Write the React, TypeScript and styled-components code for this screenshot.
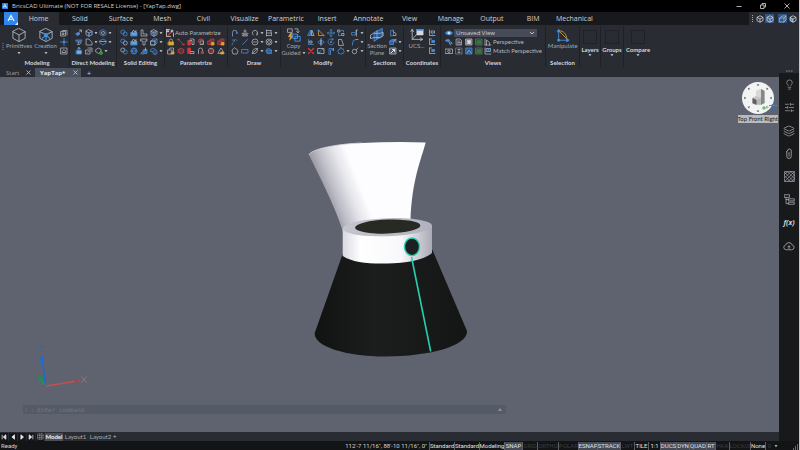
import React from "react";
import styled, { createGlobalStyle } from "styled-components";
import { Layers, Lightbulb, SlidersHorizontal } from "lucide-react";

const G = "#b4b8c0";
const B = "#4790de";
const R = "#cc3a40";
const Y = "#dba63c";
const PANEL = "#2a2c34";
const NARROW = `Lato, "Open Sans", sans-serif`;

const Global = createGlobalStyle`
  * { box-sizing: border-box; }
  html, body, #root { height: 100%; }
  body {
    margin: 0;
    background: #000;
    color: #c3c5cb;
    font: 6px/8px "Open Sans", "Noto Sans", sans-serif;
    overflow: hidden;
  }
  button, input, select {
    font: inherit;
    color: inherit;
    background: none;
    border: 0;
    padding: 0;
    margin: 0;
  }
  svg { display: block; flex: none; }
`;

/* ---------- drawing helpers ---------- */

type StrokeProps = { d: string; c?: string; f?: string; w?: number };
const P = ({ d, c = G, f = "none", w = 1.5 }: StrokeProps) => (
  <path d={d} stroke={c} fill={f} strokeWidth={w} strokeLinejoin="round" strokeLinecap="round" />
);
const O = ({ x, y, r, c = G, f = "none" }: { x: number; y: number; r: number; c?: string; f?: string }) => (
  <circle cx={x} cy={y} r={r} stroke={c} fill={f} strokeWidth={1.5} />
);

const CUBE = "M8 1.5 14 4.7V11.3L8 14.5 2 11.3V4.7ZM2 4.7 8 8 14 4.7M8 8V14.5";
const BOX = "M2 6H10V14H2ZM2 6 6 2H14L10 6M14 2V10L10 14";

const glyphs: Record<string, React.ReactNode> = {
  cube: <P d="M8 0.5 15 4.2V11.8L8 15.5 1 11.8V4.2ZM1 4.2 8 8 15 4.2M8 8V15.5" w={1} />,
  creation: (
    <>
      <P d="M8 0.5 15 4.2V11.8L8 15.5 1 11.8V4.2ZM1 4.2 8 8 15 4.2" w={1} />
      <P d="M4 5.5 12 11.5M12 5.5 4 11.5M8 8V14" c={B} w={1.3} />
      <O x={8} y={8} r={1.4} c={B} f={B} />
    </>
  ),
  solidBox: <P d={BOX} />,
  mirrorPart: (<><P d="M5 3H14V12" /><P d="M2 5H11V14H2Z" /><P d="M5 8H8V11H5Z" /></>),
  spin: (<><P d="M1 8H6M10 8H15M8 1V5M8 11V15" c={B} /><O x={8} y={8} r={2} c={B} f={B} /></>),
  frame: (<><P d="M2 2H14V14H2Z" /><P d="M5 8 8 5 11 8V11H5Z" /></>),
  pull: (<><P d="M2 9 7 7 10 10 5 13Z" c={B} f={B} /><P d="M8 7 13 2M9 2H13V6" /></>),
  cubeBlue: (<><P d={CUBE} /><P d="M8 8 14 4.7V11.3L8 14.5Z" c={B} /></>),
  ring: (<><P d="M8 1.5 14 5V11L8 14.5 2 11V5Z" c={B} /><O x={8} y={8} r={3} /></>),
  cup: (<><P d="M2 4H14L12 8H4Z" c={B} f="#2e5f96" /><P d="M8 8 5 13H9L12 9" /></>),
  chamfer: <P d="M3 2H8L14 9V14H3Z" />,
  poly: (<><P d="M2 5 8 2 14 5V10L8 14 2 10Z" c={B} /><P d="M2 7H14" /></>),
  extrude: (<><P d="M8 1V6M5 4 8 1 11 4" /><P d="M3 7H13V14H3Z" c={B} f={B} /><P d="M6 9V12M10 9V12" c="#dfe3ea" /></>),
  sheets: (<><P d="M2 6H10V14H2ZM6 2H14V10" /><P d="M5 11 12 4" c={B} w={2} /></>),
  paint: (<><P d="M2 5 7 2 12 5V10L7 13 2 10Z" /><O x={12} y={12} r={3} c="#49a548" f="#2f8d35" /></>),
  union: (<><O x={5.5} y={6} r={4} c={B} /><O x={10.5} y={10} r={4} c={B} /></>),
  subtract: (<><O x={10.5} y={10} r={4} /><O x={5.5} y={6} r={4} c={B} /></>),
  intersect: (<><O x={5.5} y={6} r={4} /><O x={10.5} y={10} r={4} c={B} /></>),
  slab: (<><P d="M2 7H14V14H2Z" c={B} f={B} /><P d="M4 7 7 2 10 6 12 3V7" /><P d="M4 10H12" /></>),
  ell: <P d="M3 2H6V10H14V14H3Z" />,
  tee: <P d="M2 2H14V6H10V14H6V6H2Z" />,
  cubeSphere: (<><P d={CUBE} /><O x={8} y={8} r={3.5} c={B} /></>),
  boxBlue: (<><P d={BOX} c={B} /><P d="M2 6H10V14H2Z" /></>),
  globe: (<><O x={8} y={8} r={6} c={B} /><P d="M2 8H14M8 2C4 6 4 10 8 14C12 10 12 6 8 2" c={B} /></>),
  stairs: (<><P d="M2 5 6 2 10 5 14 8V13L10 15 6 13V9L2 9Z" c={B} /><P d="M6 9 10 5M10 15V10" c={B} /></>),
  wedge: (<><P d="M2 13 8 5V13ZM8 5H14V13H8" c={B} f="#2e5f96" /><P d="M11 2V8" /></>),
  wand: (<><P d="M1 1H7M1 1V15H9M15 8V15" c="#e8e8e8" w={1.4} /><P d="M4 13 11 6" c={R} w={2.4} /><P d="M4 3V6M2.5 4.5H5.5M12 2V6M10 4H14" c="#e8e8e8" w={1.8} /></>),
  lock: (<><P d="M5 8V5A3 3 0 0 1 11 5V8" c={Y} /><P d="M3 8H13V14H3Z" c={Y} f={Y} /></>),
  redLine: (<><P d="M3 3 13 13" c={R} w={1.6} /><P d="M2 3H4M12 13H14" c={R} w={3} /></>),
  redBars: (<><P d="M2 5H7V14H2Z" c={R} f={R} /><P d="M6 2H14V13H10V5H6" /></>),
  redHook: (<><P d="M3 8A5 5 0 1 1 9 12" c={R} w={2.2} /><P d="M7 6H13V13H7Z" /></>),
  redLock: (<><P d="M2 6H10V13H2ZM4 6 7 2H14V8" c={R} f="#742a30" /><P d="M9 9H14V14H9Z" c={Y} f={Y} /></>),
  greyLock: (<><P d="M2 6H10V14H2ZM4 5 6 2H13V9" /><P d="M9 10H14V14H9Z" c={Y} f={Y} /></>),
  redRing: (<><O x={8} y={8} r={5.5} c={R} /><P d="M2 6H14M2 10H14" c={R} /></>),
  redStep: (<><P d="M2 2H7V13H2Z" c={R} f={R} /><P d="M7 9H14V13H7" /></>),
  arch: (<><P d="M3 13V6A4 4 0 0 1 11 6V8" /><P d="M9 9H13V13H9Z" c={R} f={R} /></>),
  bulb: (<><O x={8} y={8} r={5.5} /><P d="M4 6H12M4 10H12" c={R} w={2} /></>),
  prism: (<><P d="M2 12 8 2 14 12Z" /><P d="M8 10H13V14H8Z" c={Y} f={Y} /></>),
  arcLine: (<><P d="M3 14V7A4 4 0 0 1 12 7" c="#7fa9da" /><O x={12} y={8} r={1.2} c={B} f={B} /></>),
  person: (<><O x={8} y={4} r={2} /><P d="M3 13C3 8 13 8 13 13ZM2 9 6 8M14 9 10 8" f="#6b7077" /></>),
  loop: <P d="M4 12A5.5 5.5 0 1 1 12 12M12 12V8" />,
  hatch: <P d="M3 2V14M3 3H12M3 8H13M3 13H12M12 3V6M13 8V13" />,
  curve: (<><P d="M2 14C2 9 5 10 6 7S9 1 12 5" c={B} /><P d="M3 4H7" c={B} /></>),
  line: <P d="M3 13 13 3" c={B} />,
  circle: (<><O x={8} y={8} r={6} /><P d="M5 8H11" /></>),
  target: (<><O x={8} y={8} r={6} /><O x={8} y={8} r={3} /></>),
  pent: <P d="M8 2 14 7 12 14H4L2 7Z" />,
  rect: <P d="M2 5H14V12H2Z" c={B} />,
  leaf: <P d="M3 13C2 5 6 3 13 3C13 10 11 14 3 13ZM3 13 13 3" />,
  gearBlue: (<><O x={7} y={8} r={5} c={B} /><P d="M4 6H13V13H6Z" c={B} f="#2e5f96" /></>),
  copy: (
    <>
      <P d="M1 1H6V5H1ZM9 1H12.500V5M11 4 12.500 5.500 14 4" w={0.9} />
      <P d="M4 6 1.5 10H4L3 14 7 9H4.5L6 6Z" c={Y} f={Y} w={0.6} />
      <P d="M7 7H12V12H7ZM9.500 9.500H15V15H9.500Z" c={B} w={1.1} />
    </>
  ),
  mirror: (<><P d="M7 3V13H2ZM9 3V13" c={B} f="#2e5f96" /><P d="M10 3 14 13H10Z" /></>),
  tri: (<><P d="M3 3V13H13Z" c={Y} /><O x={3} y={3} r={1.2} c={B} f={B} /><O x={13} y={13} r={1.2} c={B} f={B} /></>),
  move: <P d="M8 1V15M1 8H15M6 3 8 1 10 3M6 13 8 15 10 13M3 6 1 8 3 10M13 6 15 8 13 10" c={B} />,
  pair: (<><P d="M2 2H6V6H2ZM10 9H14V13H10Z" /><P d="M9 3H13V6M3 9V13H7" c={B} /></>),
  trim: (<><P d="M2 7H9V12H2Z" c={B} /><P d="M11 2V14M9 4 13 2" /></>),
  align: (<><P d="M3 3V13H13" c={B} /><P d="M6 6H10V10H6Z" /></>),
  flip: (<><P d="M2 8 7 4V12ZM14 8 9 4V12Z" c={B} /><P d="M8 1V15" /></>),
  rotate: (<><P d="M12 3A6 6 0 1 0 14 9M12 1V4H9" c={B} /><O x={8} y={8} r={1} /></>),
  cut: <P d="M3 14V3H9L13 14Z" />,
  fillet: (<><P d="M3 14V10A7 7 0 0 1 10 3" c={B} /><P d="M10 3H14" /></>),
  cross: <P d="M3 3 13 13M13 3 3 13" c="#d8383e" w={2.6} />,
  scale: (<><P d="M2 3H14V13H2Z" /><P d="M4 11 8 7M6 11H2M10 5H13V8" c={B} /></>),
  stretch: (<><P d="M4 14V3H11V6H7V14Z" c={B} /><P d="M13 3V7" /></>),
  array: <P d="M8 1 10 4H13V7L15 9 12 11V13H9L8 15 6 13H3V10L1 8 4 6V4H7Z" c={B} />,
  orbit: (<><O x={7} y={9} r={4.5} /><P d="M10 6 14 2" /></>),
  section: (
    <>
      <P d="M5 5 14 0.500V9L5 15Z" c={B} f="#28588f" w={1} />
      <P d="M1 8 4 6H12L15 5V9L12 11H4L1 12Z" w={1} />
      <P d="M8 3V12" c="#8ebdf0" w={0.8} />
    </>
  ),
  sectionSmall: (<><P d="M4 3 9 2V13L4 14Z" c={B} /><P d="M8 5 14 9V13H9" /></>),
  sectionBox: (<><P d="M2 6H9V13H2ZM2 6 6 3H14V9" c={B} f="#2e5f96" /><P d="M9 6 14 3" /></>),
  sectionView: (<><P d="M2 2H14V14H2Z" f="#4d525b" /><P d="M4 12 11 5M7 5H11V9" c="#e4e6e9" w={2} /></>),
  ucs: (
    <>
      <P d="M2.500 1.500V13H14M1 4 2.500 1.500 4 4M12 11.500 14.500 13 12 14.500M2.500 13 7 8" w={1} />
      <P d="M8 2H15V8H8Z" c="#e6e8eb" f="#d4d7dc" w={0.6} />
      <P d="M8 2H15" c={B} w={2} />
    </>
  ),
  ucsSmall: (<><P d="M3 2V13H14M3 2H7" /><P d="M8 5H13V9H8Z" c={B} f={B} /></>),
  ucsGrey: (<><P d="M3 2V13H14M7 4H13V8H7Z" /><P d="M9 11V14" c={B} /></>),
  eye: (<><P d="M1 8C4 3 12 3 15 8C12 13 4 13 1 8Z" c={B} f={B} /><O x={8} y={8} r={2} c="#dceaff" f="#dceaff" /></>),
  eyes: (<><P d="M1 5C3 2 8 2 10 5C8 8 3 8 1 5Z" c={B} f={B} /><P d="M8 8 11 14M12 8 14 11" /><O x={11} y={10} r={2} c={B} /></>),
  doc: (<><P d="M3 2H10L13 5V14H3Z" /><P d="M5 6H10M5 9H11M5 12H11" /></>),
  light: (<><P d="M2 2H14V14H2Z" f="#63686f" /><P d="M5 5H11V11H5Z" c="#d4d7dc" f="#d4d7dc" /></>),
  green: (<><P d="M2 2H14V14H2Z" c="#73777d" /><P d="M4 5H12V12H4Z" c="#2e7c35" f="#2e7c35" /></>),
  camera: (<><P d="M1 4H15V13H1Z" /><O x={8} y={8.5} r={2.5} /></>),
  page: (<><P d="M2 2H14V14H2Z" c="#7e828a" /><P d="M8 5V11M6 5H10M6 11H10" /></>),
  picture: (<><P d="M2 2H14V14H2Z" c={B} f="#28588f" /><P d="M4 12 8 6 12 12" /></>),
  persp: <P d="M2 14V2M5 14V4L11 9V14M2 14H14" />,
  match: (<><P d="M2 2V14H14M5 3H13V9H5Z" /><P d="M5 6H13M9 3V9" c={B} /></>),
  manipulate: (
    <>
      <P d="M3 2V14H14" c={B} w={1} />
      <P d="M3 3C9 3 12 7 12.500 13M3 3 13 13" c={Y} w={0.9} />
      <P d="M1.500 4 3 1.500 4.500 4ZM12.500 12.500 15 14 12.500 15.500Z" c={B} f={B} w={1} />
      <O x={3} y={14} r={0.9} c={B} f={B} />
    </>
  ),
  clip: <P d="M5 5V11A3 3 0 0 0 11 11V4A2.500 2.500 0 0 0 6 3.500M8 6V11M6 3.500C5 4 5 4 5 5" w={1} />,
  cloud: (<><P d="M4 13A3.200 3.200 0 0 1 3.500 6.700 4.600 4.600 0 0 1 12.300 6.700 3.200 3.200 0 0 1 12 13Z" w={1} /><P d="M8 11.500V8M6.500 9.300 8 7.800 9.500 9.300" w={1} /></>),
  hatchPanel: (<><P d="M1 1H15V15H1Z" w={1} /><P d="M1 5 5 1M1 10 10 1M1 15 15 1M6 15 15 6M11 15 15 11M5 1 15 11M1 2 14 15M1 7 9 15M10 1 15 6" w={0.8} /></>),
  tree: <P d="M1 1H8V5H1ZM7 7H15V10H7ZM7 12H15V15H7ZM3 5V14H7M3 8H7" w={1} />,
  sheet: <P d="M2 2H14V14H2ZM2 6H14M2 10H14M6 2V14M10 2V14" w={1} />,
};

const Icon = ({ name, size = 8 }: { name: string; size?: number }) => (
  <svg width={size} height={size} viewBox="0 0 16 16" aria-hidden="true">{glyphs[name]}</svg>
);

const Caret = () => (
  <svg width="4" height="4" viewBox="0 0 4 4" aria-hidden="true">
    <path d="M0.500 1.200H3.500L2 3Z" fill="#e3e5e8" />
  </svg>
);

/* ---------- frame ---------- */

const Window = styled.div`
  display: flex;
  flex-direction: column;
  height: 100vh;
  border-right: 1px solid #c4c5c7;
  background: ${PANEL};
`;
const TitleBar = styled.header`
  display: flex;
  align-items: center;
  flex: none;
  height: 12px;
  padding-left: 2px;
  gap: 4px;
  background: #000;
  color: #d2d2d2;
`;
const Title = styled.h1`
  margin: 0;
  flex: 1;
  font-size: 6px;
  font-weight: 400;
  white-space: nowrap;
`;
const WindowButtons = styled.div`
  display: flex;
`;
const WindowButton = styled.button`
  display: grid;
  place-items: center;
  width: 24px;
  height: 12px;
`;
const MenuBar = styled.div`
  display: flex;
  flex: none;
  height: 13px;
  padding-left: 4px;
  background: #18191c;
`;
const AppButton = styled.button`
  display: grid;
  place-items: center;
  width: 14px;
  height: 13px;
  background: #3186ee;
`;
const Tabs = styled.nav`
  display: grid;
  grid-template-columns: repeat(14, 1fr);
  width: 577px;
`;
const MenuTab = styled.button<{ $on?: boolean }>`
  font-size: 7px;
  line-height: 12px;
  white-space: nowrap;
  color: #cfd1d5;
  background: ${(p) => (p.$on ? PANEL : "transparent")};
`;
const QuickBar = styled.div`
  display: flex;
  align-items: center;
  gap: 1px;
  margin-left: auto;
  padding: 0 2px;
  background: ${PANEL};
`;
const QuickButton = styled.button<{ $on?: boolean; $gap?: boolean }>`
  display: grid;
  place-items: center;
  width: 9px;
  height: 9px;
  margin-left: ${(p) => (p.$gap ? 3 : 0)}px;
  background: ${(p) => (p.$on ? "#2d568b" : "transparent")};
`;

/* ---------- ribbon ---------- */

const Ribbon = styled.div`
  display: flex;
  flex: none;
  height: 43px;
  padding: 1px 0;
`;
const Grip = styled.div`
  display: grid;
  place-items: center;
  width: 5px;
`;
const Group = styled.section<{ $w: number }>`
  display: flex;
  flex-direction: column;
  align-items: center;
  flex: none;
  width: ${(p) => p.$w}px;
  border-right: 1px solid #202127;
`;
const GroupBody = styled.div`
  display: flex;
  justify-content: center;
  flex: 1;
  min-height: 0;
  gap: 1px;
  padding-top: 2px;
`;
const GroupName = styled.h2`
  margin: 0;
  height: 9px;
  font: 700 6px/9px ${NARROW};
  white-space: nowrap;
  color: #d3d5da;
`;
const BigButton = styled.button<{ $w: number }>`
  display: flex;
  flex-direction: column;
  align-items: center;
  align-self: flex-start;
  width: ${(p) => p.$w}px;
  white-space: nowrap;
  font-family: ${NARROW};
  color: #a3a6ad;
`;
const BigLabel = styled.span<{ $tall?: boolean }>`
  display: flex;
  align-items: center;
  gap: 1px;
  height: 7px;
  line-height: 7px;
  margin-bottom: ${(p) => (p.$tall ? 2 : 0)}px;
`;
const Stack = styled.div`
  display: flex;
  flex-direction: column;
`;
const IconRow = styled.div`
  display: flex;
  align-items: center;
  height: 9px;
`;
const Tool = styled.button<{ $wide?: boolean }>`
  display: flex;
  align-items: center;
  gap: 1px;
  width: ${(p) => (p.$wide ? 14 : 10)}px;
  height: 9px;
  padding-left: 1px;
`;
const TextTool = styled.button`
  display: flex;
  align-items: center;
  gap: 1px;
  height: 9px;
  font-family: ${NARROW};
  white-space: nowrap;
  color: #b4b7bd;
`;
const ViewSelect = styled.select`
  appearance: none;
  width: 83px;
  height: 8px;
  padding: 0 2px;
  line-height: 8px;
  color: #d5d7db;
  background: #464b57 url("data:image/svg+xml,%3Csvg xmlns='http://www.w3.org/2000/svg' width='6' height='4'%3E%3Cpath d='M1 1l2 2 2-2' fill='none' stroke='%23c3c5cb'/%3E%3C/svg%3E") no-repeat right 2px center;
`;
const PanelButton = styled.button<{ $w: number }>`
  display: flex;
  flex-direction: column;
  align-items: center;
  flex: none;
  width: ${(p) => p.$w}px;
  padding-top: 4px;
  border-right: 1px solid #202127;
  font: 700 6px/7px ${NARROW};
  color: #d3d5da;
  &:last-child { border-right: 0; }
`;
const EmptyBox = styled.span`
  width: 14px;
  height: 14px;
  margin-bottom: 2px;
  border: 1px solid #202127;
`;

/* A name ending in ">" carries a drop-down caret; one ending in "_" takes a wide slot. */
const ToolRows = ({ rows }: { rows: string[][] }) => (
  <Stack>
    {rows.map((row, i) => (
      <IconRow key={i}>
        {row.map((item, j) => {
          const name = item.replace(/[>_]$/, "");
          return (
            <Tool key={j} aria-label={name} $wide={name !== item}>
              <Icon name={name} />
              {item.endsWith(">") && <Caret />}
            </Tool>
          );
        })}
      </IconRow>
    ))}
  </Stack>
);

/* ---------- workspace ---------- */

const Workspace = styled.div`
  display: flex;
  flex: 1;
  min-height: 0;
`;
const Main = styled.div`
  display: flex;
  flex-direction: column;
  flex: 1;
  min-width: 0;
`;
const DocTabs = styled.div`
  display: flex;
  flex: none;
  height: 9px;
`;
const DocTab = styled.div<{ $on?: boolean }>`
  display: flex;
  align-items: center;
  justify-content: space-between;
  width: ${(p) => (p.$on ? 46 : 35)}px;
  padding: 0 ${(p) => (p.$on ? 3 : 4)}px 0 ${(p) => (p.$on ? 5 : 6)}px;
  font-weight: ${(p) => (p.$on ? 700 : 400)};
  color: ${(p) => (p.$on ? "#e4e6ea" : "#9ea1a8")};
  background: ${(p) => (p.$on ? "#4a505c" : "transparent")};
`;
const AddTab = styled.button`
  width: 16px;
  font-size: 8px;
  line-height: 8px;
`;
const Canvas = styled.main`
  position: relative;
  flex: 1;
  min-height: 0;
  overflow: hidden;
  background: #5f636f;
  border-top: 1px solid #59616c;
`;
const Scene = styled.svg`
  position: absolute;
  inset: 0;
  width: 100%;
  height: 100%;
`;
const ViewCube = styled.div`
  position: absolute;
  top: 3px;
  right: 1px;
  display: flex;
  flex-direction: column;
  align-items: center;
`;
const CompassSvg = styled.svg`
  overflow: visible;
`;
const CubeLabel = styled.span`
  line-height: 8px;
  font-family: ${NARROW};
  white-space: nowrap;
  color: #202226;
  background: #b9bac0;
`;
const CommandBar = styled.label`
  position: absolute;
  left: 3%;
  bottom: 18px;
  display: flex;
  align-items: center;
  width: 62%;
  height: 9px;
  padding: 0 4px 0 2px;
  gap: 3px;
  border-radius: 1px;
  font-family: "DejaVu Sans Mono", monospace;
  color: #747a85;
  background: #545b67;
`;
const CommandInput = styled.input`
  flex: 1;
  height: 8px;
  font-style: italic;
  &::placeholder { color: #727883; opacity: 1; }
`;
const LayoutBar = styled.div`
  display: flex;
  align-items: center;
  flex: none;
  height: 9px;
`;
const NavButton = styled.button`
  display: grid;
  place-items: center;
  width: 8px;
  height: 8px;
  margin-right: 1px;
  background: #15161a;
`;
const LayoutTab = styled.button<{ $on?: boolean }>`
  height: 8px;
  width: ${(p) => (p.$on ? 18 : 25)}px;
  font: ${(p) => (p.$on ? 700 : 400)} 6px/8px ${NARROW};
  color: ${(p) => (p.$on ? "#f0f1f3" : "#a9acb2")};
  background: ${(p) => (p.$on ? "#4a4e59" : "transparent")};
`;
const Sidebar = styled.aside`
  display: flex;
  flex-direction: column;
  flex: none;
  width: 20px;
`;
const SideHandle = styled.div`
  display: grid;
  place-items: center;
  height: 5px;
`;
const SideTools = styled.div`
  flex: 1;
  background: #17191b;
`;
const SideButton = styled.button`
  display: grid;
  place-items: center;
  width: 20px;
  height: 23px;
  color: #a5a8ad;
`;
const Fx = styled.span`
  font: italic 700 7px/10px "Noto Sans", sans-serif;
  color: #d5d7da;
`;

/* ---------- status bar ---------- */

const StatusBar = styled.footer`
  display: flex;
  align-items: center;
  flex: none;
  height: 9px;
  padding: 0 1px;
  font-family: Roboto, sans-serif;
  color: #d4d6d9;
  background: #121416;
`;
const Coordinates = styled.output`
  margin-left: auto;
  padding-right: 2px;
  white-space: nowrap;
`;
const Cell = styled.button<{ $w: number; $state: string }>`
  display: flex;
  justify-content: center;
  flex: none;
  width: ${(p) => p.$w}px;
  height: 8px;
  border-left: 1px solid #5b5e64;
  line-height: 8px;
  white-space: nowrap;
  color: ${(p) => (p.$state === "off" ? "#3b3e43" : "#e0e2e5")};
  background: ${(p) => (p.$state === "on" ? "#444954" : "transparent")};
`;

const cells: [string, number, string][] = [
  ["Standard", 25, "plain"], ["Standard", 25, "plain"], ["Modeling", 25, "plain"],
  ["SNAP", 18, "on"], ["GRID", 15, "off"], ["ORTHO", 21, "off"], ["POLAR", 20, "off"],
  ["ESNAP", 19, "on"], ["STRACK", 23, "on"], ["LWT", 14, "off"], ["TILE", 14, "plain"],
  ["1:1", 12, "plain"], ["DUCS", 16, "on"], ["DYN", 13, "on"], ["QUAD", 17, "on"],
  ["RT", 9, "on"], ["HKA", 14, "off"], ["LOCKUI", 21, "off"], ["None", 15, "plain"], ["0", 8, "off"],
];

const menu = ["Home", "Solid", "Surface", "Mesh", "Civil", "Visualize", "Parametric", "Insert",
  "Annotate", "View", "Manage", "Output", "BIM", "Mechanical"];

const windowShapes: [string, string][] = [
  ["Minimize", "M0.500 3.500H5.500"],
  ["Restore", "M0.500 2H4V5.500H0.500ZM2 2V0.500H5.500V4H4"],
  ["Close window", "M0.500 0.500 5.500 5.500M5.500 0.500 0.500 5.500"],
];

const layoutArrows: [string, string][] = [
  ["First", "M1.500 1V7M6.500 1V7L3 4Z"],
  ["Previous", "M6 1V7L2.500 4Z"],
  ["Next", "M2.500 1V7L6 4Z"],
  ["Last", "M6.500 1V7M1.500 1V7L5 4Z"],
];

const Close = () => (
  <svg width="5" height="5" viewBox="0 0 5 5" aria-hidden="true">
    <path d="M0.500 0.500 4.500 4.500M4.500 0.500 0.500 4.500" stroke="#c9cbd0" strokeWidth="0.800" />
  </svg>
);

const QuickCube = ({ solid }: { solid?: boolean }) => (
  <svg width="8" height="8" viewBox="0 0 16 16" aria-hidden="true">
    {solid && <path d="M2 4.700 8 8V14.500L2 11.300Z" fill={B} />}
    <path d={CUBE} stroke="#d9dde3" strokeWidth="1.500" fill="none" />
  </svg>
);

const Model = () => (
  <Scene viewBox="0 78 779 354" preserveAspectRatio="xMidYMid slice" role="img" aria-label="3D model">
    <defs>
      <linearGradient id="funnel" x1="320" y1="195" x2="358" y2="180" gradientUnits="userSpaceOnUse">
        <stop offset="0" stopColor="#85868f" />
        <stop offset="0.350" stopColor="#bcbcc6" />
        <stop offset="0.700" stopColor="#e4e4ea" />
        <stop offset="1" stopColor="#fdfdff" />
      </linearGradient>
      <linearGradient id="collar">
        <stop offset="0" stopColor="#d8d8e0" />
        <stop offset="0.200" stopColor="#ffffff" />
        <stop offset="0.650" stopColor="#f8f8fc" />
        <stop offset="1" stopColor="#a9aab6" />
      </linearGradient>
      <linearGradient id="rim">
        <stop offset="0" stopColor="#c5c5cf" />
        <stop offset="1" stopColor="#b1b2bd" />
      </linearGradient>
      <linearGradient id="base">
        <stop offset="0" stopColor="#111212" />
        <stop offset="0.400" stopColor="#1c1d1d" />
        <stop offset="1" stopColor="#141515" />
      </linearGradient>
    </defs>
    <path d="M309 155C310 150 333 144 362 143Q394 141.500 425.700 142.500C421 160 412 180 410.500 220L343 232C337 212 325 187 309 155Z" fill="url(#funnel)" />
    <path d="M309 155C310 150 333 144 362 143" stroke="#d6d7dc" strokeWidth="0.800" fill="none" />
    <path d="M343 253 314.700 333C313.500 346 345 356.500 385 356.500 430 356.500 468 346 467 331L432.500 250Z" fill="url(#base)" />
    <path d="M342.700 229V256C352 262.500 370 264 387 263.500 407 263.500 425 259.500 432 253V225Z" fill="url(#collar)" />
    <ellipse cx="387.400" cy="227.200" rx="44.700" ry="9" transform="rotate(-2 387 227)" fill="url(#rim)" />
    <ellipse cx="387.700" cy="226.600" rx="32.700" ry="7" transform="rotate(-2 387 227)" fill="#272923" />
    <path d="M411.500 257 430.700 351.500" stroke="#27cfaf" strokeWidth="1.600" />
    <ellipse cx="412" cy="246.800" rx="7.500" ry="8.800" fill="#1c2021" stroke="#27cfaf" strokeWidth="1.400" />
    <g strokeWidth="1.300" fill="none">
      <path d="M46 386 80 380.500" stroke="#c1514f" />
      <path d="M45.500 386 42 358" stroke="#2169cd" strokeWidth="1.800" />
      <path d="M45 385 40 378" stroke="#27925a" />
      <path d="M80 380.300 74.500 379.500V383Z" fill="#a84445" />
      <path d="M41.500 354 39.500 361.500 44.500 360.500Z" fill="#216bd1" />
      <path d="M40 375V382M38 379H43.500" stroke="#189253" strokeWidth="1.800" />
      <path d="M81.500 376.500 86.500 382.500M86.500 376.500 81.500 382.500" stroke="#a37774" strokeWidth="0.800" />
      <path d="M38.500 346.500H43.500L39 351.500H44" stroke="#3c6499" strokeWidth="0.800" />
    </g>
  </Scene>
);

const Compass = () => (
  <CompassSvg width="34" height="34" viewBox="0 0 34 34" role="img" aria-label="View orientation">
    <circle cx="17" cy="17" r="16" fill="#f2f3f3" />
    {[0, 45, 90, 135, 180, 225, 270, 315].map((a) => (
      <path key={a} d="M16.100 3.500H17.900L17 5Z" fill="#4b4f55" stroke="#4b4f55" strokeWidth="0.300" transform={`rotate(${a} 17 17)`} />
    ))}
    <path d="M15.500 10 20 8 23.500 10V22L19 24 11.500 23V17L15.500 15Z" fill="#b5b6b5" />
    <path d="M15.500 10 20 8V16L15.500 18Z" fill="#d7d8d7" />
    <path d="M20 8 23.500 10V22L20 24Z" fill="#858785" />
    <path d="M11.500 17 15.500 15 20 17 15.500 19Z" fill="#c6c7c6" />
    <path d="M11.500 17 15.500 19V24L11.500 22Z" fill="#5e605e" />
    <circle cx="23" cy="27" r="1.800" fill="#62c95d" />
    <path d="M28 24.500H36" stroke="#4aa85a" />
    <path d="M31 23.500H34V27.500H31Z" fill="none" stroke="#416fae" strokeWidth="0.800" />
    <circle cx="26.500" cy="26.500" r="1" fill="#8dd48a" />
  </CompassSvg>
);

export default function App() {
  return (
    <>
      <Global />
      <Window>
        <TitleBar>
          <svg width="6" height="6" viewBox="0 0 6 6" aria-hidden="true">
            <rect width="6" height="6" rx="0.500" fill="#2c82e8" />
            <path d="M1.200 4.800 2.800 1.200 4.600 4.800M2 3.700H4" stroke="#fff" strokeWidth="0.700" fill="none" />
          </svg>
          <Title>BricsCAD Ultimate (NOT FOR RESALE License) - [YapTap.dwg]</Title>
          <WindowButtons>
            {windowShapes.map(([name, d]) => (
              <WindowButton key={name} aria-label={name}>
                <svg width="6" height="6" viewBox="0 0 6 6" aria-hidden="true">
                  <path d={d} stroke="#dcdcdc" strokeWidth="0.800" fill="none" />
                </svg>
              </WindowButton>
            ))}
          </WindowButtons>
        </TitleBar>

        <MenuBar>
          <AppButton aria-label="Application menu">
            <svg width="14" height="13" viewBox="0 0 14 13" aria-hidden="true">
              <path d="M4 9 7 3.500 10 9M5.500 7.200H8" stroke="#fff" strokeWidth="1.100" fill="none" />
              <path d="M14 10V13H11Z" fill="#e6eefb" />
            </svg>
          </AppButton>
          <Tabs>
            {menu.map((m) => <MenuTab key={m} $on={m === "Home"}>{m}</MenuTab>)}
          </Tabs>
          <QuickBar>
            <svg width="3" height="7" viewBox="0 0 3 7" aria-hidden="true">
              <path d="M1.500 0V7" stroke="#a9acb2" strokeDasharray="1 1" />
            </svg>
            <QuickButton aria-label="Wireframe"><QuickCube /></QuickButton>
            <QuickButton aria-label="Shaded" $on><QuickCube /></QuickButton>
            <QuickButton aria-label="Box view" $on $gap><Icon name="solidBox" /></QuickButton>
            <QuickButton aria-label="Rendered"><QuickCube solid /></QuickButton>
          </QuickBar>
        </MenuBar>

        <Ribbon>
          <Grip>
            <svg width="2" height="7" viewBox="0 0 2 7" aria-hidden="true">
              <path d="M1 0V7" stroke="#85888f" strokeDasharray="1 1" />
            </svg>
          </Grip>
          <Group $w={65}>
            <GroupBody>
              <BigButton $w={27}><Icon name="cube" size={14} /><BigLabel $tall>Primitives</BigLabel><Caret /></BigButton>
              <BigButton $w={24}><Icon name="creation" size={14} /><BigLabel $tall>Creation</BigLabel><Caret /></BigButton>
              <ToolRows rows={[["mirrorPart"], ["spin"], ["frame"]]} />
            </GroupBody>
            <GroupName>Modeling</GroupName>
          </Group>
          <Group $w={47}>
            <GroupBody>
              <ToolRows rows={[["pull", "cubeBlue>", "ring>"], ["cup", "chamfer>", "poly>"], ["extrude", "sheets", "paint>"]]} />
            </GroupBody>
            <GroupName>Direct Modeling</GroupName>
          </Group>
          <Group $w={48}>
            <GroupBody>
              <ToolRows rows={[["union", "slab", "ell", "cubeSphere>"], ["subtract", "slab", "tee", "boxBlue>"], ["intersect", "globe", "wedge", "stairs>"]]} />
            </GroupBody>
            <GroupName>Solid Editing</GroupName>
          </Group>
          <Group $w={63}>
            <GroupBody>
              <Stack>
                <TextTool><Icon name="wand" />Auto Parametrize</TextTool>
                <ToolRows rows={[["lock", "redLine", "redBars", "redHook", "redLock", "redLock"], ["greyLock", "redRing", "redStep", "arch", "bulb", "prism"]]} />
              </Stack>
            </GroupBody>
            <GroupName>Parametrize</GroupName>
          </Group>
          <Group $w={53}>
            <GroupBody>
              <ToolRows rows={[["arcLine", "person", "loop>", "hatch>"], ["curve", "line", "circle>", "target>"], ["pent", "rect", "leaf>", "gearBlue>"]]} />
            </GroupBody>
            <GroupName>Draw</GroupName>
          </Group>
          <Group $w={85}>
            <GroupBody>
              <BigButton $w={23}>
                <Icon name="copy" size={14} />
                <BigLabel>Copy</BigLabel>
                <BigLabel>Guided <Caret /></BigLabel>
              </BigButton>
              <ToolRows rows={[["mirror", "tri", "move", "pair_", "trim>"], ["align", "flip", "rotate", "cut_", "fillet>"], ["cross", "scale", "stretch", "array>", "orbit>"]]} />
            </GroupBody>
            <GroupName>Modify</GroupName>
          </Group>
          <Group $w={38}>
            <GroupBody>
              <BigButton $w={20}>
                <Icon name="section" size={14} />
                <BigLabel>Section</BigLabel>
                <BigLabel>Plane</BigLabel>
              </BigButton>
              <ToolRows rows={[["sectionSmall_"], ["sectionBox>"], ["sectionView>"]]} />
            </GroupBody>
            <GroupName>Sections</GroupName>
          </Group>
          <Group $w={37}>
            <GroupBody>
              <BigButton $w={18}><Icon name="ucs" size={14} /><BigLabel>UCS...</BigLabel></BigButton>
              <ToolRows rows={[["ucsGrey"], ["ucsSmall"], ["ucsSmall"]]} />
            </GroupBody>
            <GroupName>Coordinates</GroupName>
          </Group>
          <Group $w={105}>
            <GroupBody>
              <Stack>
                <IconRow>
                  <Tool aria-label="Show view"><Icon name="eye" /></Tool>
                  <ViewSelect aria-label="Saved view" defaultValue="Unsaved View"><option>Unsaved View</option></ViewSelect>
                </IconRow>
                <IconRow>
                  <ToolRows rows={[["eyes", "doc", "light", "green"]]} />
                  <TextTool><Icon name="persp" />Perspective</TextTool>
                </IconRow>
                <IconRow>
                  <ToolRows rows={[["camera", "page", "picture", "green"]]} />
                  <TextTool><Icon name="match" />Match Perspective</TextTool>
                </IconRow>
              </Stack>
            </GroupBody>
            <GroupName>Views</GroupName>
          </Group>
          <Group $w={34}>
            <GroupBody>
              <BigButton $w={30}><Icon name="manipulate" size={14} /><BigLabel>Manipulate</BigLabel></BigButton>
            </GroupBody>
            <GroupName>Selection</GroupName>
          </Group>
          <PanelButton $w={21}><EmptyBox />Layers<Caret /></PanelButton>
          <PanelButton $w={23}><EmptyBox />Groups<Caret /></PanelButton>
          <PanelButton $w={28}><EmptyBox />Compare<Caret /></PanelButton>
        </Ribbon>

        <Workspace>
          <Main>
            <DocTabs>
              <DocTab><button>Start</button><button aria-label="Close Start"><Close /></button></DocTab>
              <DocTab $on><button>YapTap*</button><button aria-label="Close YapTap"><Close /></button></DocTab>
              <AddTab aria-label="New drawing">+</AddTab>
            </DocTabs>
            <Canvas>
              <Model />
              <ViewCube>
                <Compass />
                <CubeLabel>Top Front Right</CubeLabel>
              </ViewCube>
              <CommandBar>
                ⁞ :
                <CommandInput placeholder="Enter command" aria-label="Command" />
                <svg width="4" height="3" viewBox="0 0 4 3" aria-hidden="true"><path d="M0 3 2 0 4 3Z" fill="#8d929b" /></svg>
              </CommandBar>
            </Canvas>
            <LayoutBar>
              {layoutArrows.map(([name, d]) => (
                <NavButton key={name} aria-label={name}>
                  <svg width="6" height="6" viewBox="0 0 8 8" aria-hidden="true"><path d={d} fill="#e8e9eb" stroke="#e8e9eb" /></svg>
                </NavButton>
              ))}
              <NavButton aria-label="Layout list"><Icon name="sheet" size={7} /></NavButton>
              <LayoutTab $on>Model</LayoutTab>
              <LayoutTab>Layout1</LayoutTab>
              <LayoutTab>Layout2</LayoutTab>
              <button aria-label="Add layout">+</button>
            </LayoutBar>
          </Main>
          <Sidebar>
            <SideHandle>
              <svg width="7" height="2" viewBox="0 0 7 2" aria-hidden="true"><path d="M0 1H7" stroke="#8b8e95" strokeDasharray="1.500 1" /></svg>
            </SideHandle>
            <SideTools>
              <SideButton aria-label="Tips"><Lightbulb size={11} strokeWidth={1.5} /></SideButton>
              <SideButton aria-label="Properties"><SlidersHorizontal size={11} strokeWidth={1.5} /></SideButton>
              <SideButton aria-label="Layers"><Layers size={12} strokeWidth={1.5} /></SideButton>
              <SideButton aria-label="Attachments"><Icon name="clip" size={12} /></SideButton>
              <SideButton aria-label="Materials"><Icon name="hatchPanel" size={11} /></SideButton>
              <SideButton aria-label="Structure"><Icon name="tree" size={11} /></SideButton>
              <SideButton aria-label="Parameters"><Fx>f(x)</Fx></SideButton>
              <SideButton aria-label="Cloud"><Icon name="cloud" size={12} /></SideButton>
            </SideTools>
          </Sidebar>
        </Workspace>

        <StatusBar>
          <span>Ready</span>
          <Coordinates>112'-7 11/16", 88'-10 11/16", 0"</Coordinates>
          {cells.map(([label, w, state], i) => <Cell key={i} $w={w} $state={state}>{label}</Cell>)}
          <Tool aria-label="Status bar options"><Caret /></Tool>
          <svg width="15" height="8" viewBox="0 0 15 8" aria-hidden="true">
            <path d="M10 7H15M12 5H15M14 3H15" stroke="#b9bbc0" strokeDasharray="1 1" />
          </svg>
        </StatusBar>
      </Window>
    </>
  );
}
